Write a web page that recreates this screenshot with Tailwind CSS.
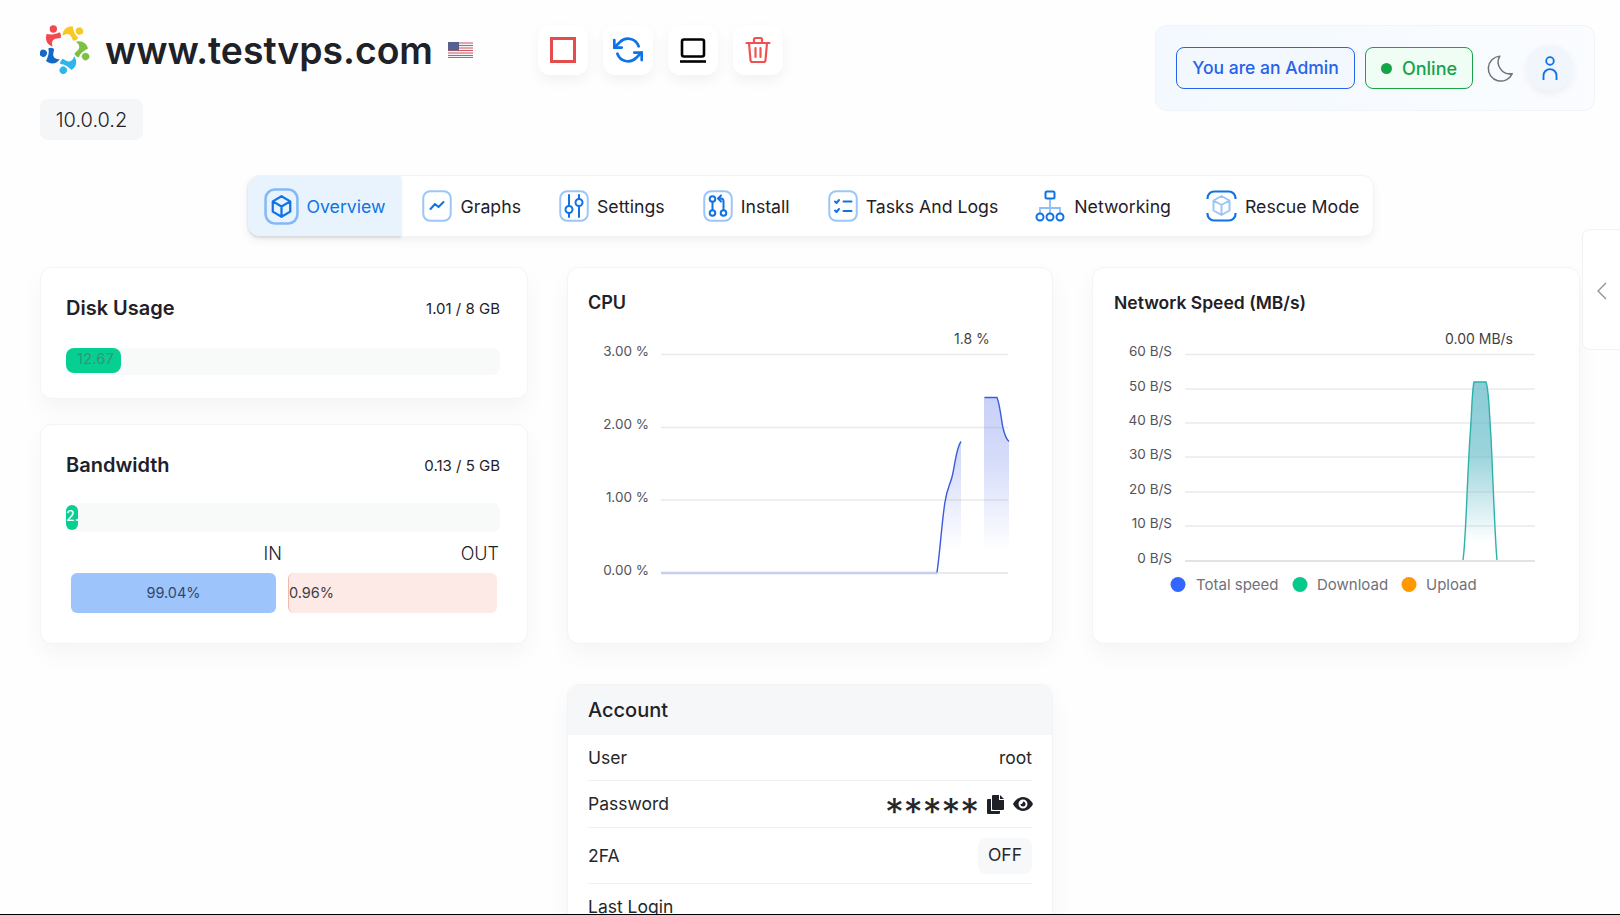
<!DOCTYPE html>
<html lang="en">
<head>
    <meta charset="UTF-8">
    <title>www.testvps.com</title>
    <script src="https://cdn.jsdelivr.net/npm/@tailwindcss/browser@4"></script>
</head>
<body class="bg-[#fefefe] font-['Inter',sans-serif] text-[#1f2128]">
<div class="relative h-[915px] overflow-hidden border-b border-black">

    <!-- Top bar -->
    <div class="flex justify-between pl-10 pr-[25px] pt-[25px]">
        <div>
            <div class="flex items-center h-[50px]">
                <svg class="w-[50px] h-[50px]" viewBox="30 31 150 150">
                    <g fill="#f0494f"><circle cx="70" cy="43" r="11"/><path d="M50 58C44 74 50 90 68 96 64 84 66 76 76 72L92 70C94 62 92 55 88 53 78 60 64 60 50 58Z"/></g>
                    <g fill="#f9c923" transform="rotate(72 105 100)"><circle cx="70" cy="43" r="11"/><path d="M50 58C44 74 50 90 68 96 64 84 66 76 76 72L92 70C94 62 92 55 88 53 78 60 64 60 50 58Z"/></g>
                    <g fill="#7cc242" transform="rotate(144 105 100)"><circle cx="70" cy="43" r="11"/><path d="M50 58C44 74 50 90 68 96 64 84 66 76 76 72L92 70C94 62 92 55 88 53 78 60 64 60 50 58Z"/></g>
                    <g fill="#2fb5ee" transform="rotate(216 105 100)"><circle cx="70" cy="43" r="11"/><path d="M50 58C44 74 50 90 68 96 64 84 66 76 76 72L92 70C94 62 92 55 88 53 78 60 64 60 50 58Z"/></g>
                    <g fill="#1269c7" transform="rotate(288 105 100)"><circle cx="70" cy="43" r="11"/><path d="M50 58C44 74 50 90 68 96 64 84 66 76 76 72L92 70C94 62 92 55 88 53 78 60 64 60 50 58Z"/></g>
                </svg>
                <h1 class="ml-[15px] text-[37.3px] font-semibold leading-none translate-y-px whitespace-nowrap">www.testvps.com</h1>
                <svg class="ml-[15px] w-[25px] h-4" viewBox="0 0 25 16">
                    <rect width="25" height="16" fill="#f4f2f4"/>
                    <path d="M0 1h25M0 3.500h25M0 6h25M0 8.500h25M0 11h25M0 13.500h25M0 15.500h25" stroke="#cf5a63" stroke-width="1.200"/>
                    <rect width="11" height="8.500" fill="#56618f"/>
                </svg>
                <!-- Action buttons -->
                <div class="ml-[65px] flex gap-[15px]">
                    <button class="w-[50px] h-[50px] rounded-xl bg-white shadow-[0_6px_14px_rgba(0,0,0,0.05)] flex items-center justify-center">
                        <svg class="w-[26px] h-[26px]" viewBox="0 0 26 26"><rect x="1.500" y="1.500" width="23" height="23" fill="none" stroke="#e54d4d" stroke-width="3"/></svg>
                    </button>
                    <button class="w-[50px] h-[50px] rounded-xl bg-white shadow-[0_6px_14px_rgba(0,0,0,0.05)] flex items-center justify-center">
                        <svg class="w-[30px] h-[30px]" viewBox="0 0 24 24" fill="none" stroke="#0f73e6" stroke-width="2.200" stroke-linecap="round" stroke-linejoin="round"><polyline points="1 4 1 10 7 10"/><polyline points="23 20 23 14 17 14"/><path d="M20.490 9A9 9 0 0 0 5.640 5.640L1 10m22 4l-4.640 4.360A9 9 0 0 1 3.510 15"/></svg>
                    </button>
                    <button class="w-[50px] h-[50px] rounded-xl bg-white shadow-[0_6px_14px_rgba(0,0,0,0.05)] flex items-center justify-center">
                        <svg class="w-[28px] h-[28px]" viewBox="0 0 28 28" fill="none" stroke="#000" stroke-width="2.600"><rect x="3" y="3.500" width="22" height="17" rx="2"/><path d="M1 25.500h26"/></svg>
                    </button>
                    <button class="w-[50px] h-[50px] rounded-xl bg-white shadow-[0_6px_14px_rgba(0,0,0,0.05)] flex items-center justify-center">
                        <svg class="w-[28px] h-[28px]" viewBox="0 0 28 28" fill="none" stroke="#f05252" stroke-width="2.200" stroke-linecap="round" stroke-linejoin="round"><path d="M2.500 7h23M10 7V3.500A1.500 1.500 0 0 1 11.500 2h5A1.500 1.500 0 0 1 18 3.500V7M5 7l1.500 17a2 2 0 0 0 2 2h11a2 2 0 0 0 2-2L23 7M11.500 12v9M16.500 12v9"/></svg>
                    </button>
                </div>
            </div>
            <div class="mt-6 w-[103px] h-[41px] rounded-lg bg-[#f5f6f8] flex items-center justify-center text-[20px] font-light">10.0.0.2</div>
        </div>

        <div class="w-[440px] h-[86px] rounded-xl border border-[#f0f3f8] bg-gradient-to-r from-[#f3f9fe] to-[#fafcff] flex items-center pl-5 pr-[20px]">
            <span class="w-[179px] h-[42px] rounded-lg border border-[#2563eb] bg-[#f3f7fe] text-[#2563eb] text-[17.5px] font-medium flex items-center justify-center">You are an Admin</span>
            <span class="ml-[10px] w-[108px] h-[42px] rounded-lg border border-[#16a34a] bg-[#f0fdf4] text-[#16a34a] text-[18px] font-medium flex items-center justify-center gap-[10px]"><span class="w-[11px] h-[11px] rounded-full bg-[#16a34a]"></span>Online</span>
            <svg class="ml-[13px] w-[30px] h-[30px]" viewBox="0 0 24 24" fill="none" stroke="#71717a" stroke-width="1.200" stroke-linejoin="round"><path d="M21 16.500A9.500 9.500 0 0 1 11 2.500a10 10 0 1 0 10 14z"/></svg>
            <div class="ml-[11px] w-[46px] h-[46px] rounded-full bg-[#f1f6fd] shadow-[0_3px_8px_rgba(0,0,0,0.06)] flex items-center justify-center">
                <svg class="w-[26px] h-[26px]" viewBox="0 0 24 24" fill="none" stroke="#0f73e6" stroke-width="1.700"><circle cx="12" cy="5.500" r="3.500"/><path d="M6 23v-4a6 6 0 0 1 12 0v4"/></svg>
            </div>
        </div>
    </div>

    <!-- Tabs -->
    <nav class="mt-[35px] mx-auto w-[1127px] h-[62px] flex rounded-xl bg-white border border-[#f3f4f6] shadow-[0_4px_10px_rgba(0,0,0,0.05)] text-[17.7px] whitespace-nowrap">
        <a class="flex items-center gap-2 h-full pl-4 pr-[15px] rounded-l-xl bg-[#e9f3fd] text-[#0f73e6] shadow-[0_2px_3px_rgba(0,0,0,0.12)]">
            <svg class="w-[35px] h-[37px]" viewBox="0 0 34 36" fill="none"><rect x="1.500" y="1.500" width="31" height="33" rx="9" stroke="#82b9f7" stroke-width="2.500"/><path d="M17 8l8.500 5v10L17 28l-8.500-5V13zM8.500 13l8.500 5 8.500-5M17 18v10" stroke="#0f73e6" stroke-width="2.200" stroke-linejoin="round"/></svg>
            <span class="translate-y-px">Overview</span>
        </a>
        <a class="flex items-center gap-[9px] h-full ml-[2px] pl-[19px] pr-[18px]">
            <svg class="w-[30px] h-[32px]" viewBox="0 0 30 32" fill="none"><rect x="1.250" y="1.250" width="27.500" height="29.500" rx="7" stroke="#9cc6f8" stroke-width="2"/><path d="M8.500 19l4.500-5 3.500 3 5-5" stroke="#0f73e6" stroke-width="2" stroke-linecap="round" stroke-linejoin="round"/></svg>
            <span class="translate-y-px">Graphs</span>
        </a>
        <a class="flex items-center gap-2 h-full pl-[20px] pr-[18px]">
            <svg class="w-[30px] h-[32px]" viewBox="0 0 30 32" fill="none"><rect x="1.250" y="1.250" width="27.500" height="29.500" rx="7" stroke="#9cc6f8" stroke-width="2"/><path d="M10 5v11M10 23v4M20 5v4M20 16v11" stroke="#0f73e6" stroke-width="2" stroke-linecap="round"/><circle cx="10" cy="19.500" r="3.500" stroke="#0f73e6" stroke-width="2"/><circle cx="20" cy="12.500" r="3.500" stroke="#0f73e6" stroke-width="2"/></svg>
            <span class="translate-y-px">Settings</span>
        </a>
        <a class="flex items-center gap-2 h-full pl-[20px] pr-[19px]">
            <svg class="w-[30px] h-[32px]" viewBox="0 0 30 32" fill="none"><rect x="1.250" y="1.250" width="27.500" height="29.500" rx="7" stroke="#9cc6f8" stroke-width="2"/><g stroke="#0f73e6" stroke-width="2" stroke-linecap="round" stroke-linejoin="round"><circle cx="9.500" cy="9" r="2.800"/><circle cx="9.500" cy="23" r="2.800"/><circle cx="20.500" cy="23" r="2.800"/><path d="M9.500 12v8M20.500 20v-9a2.500 2.500 0 0 0-2.500-2.500h-2M18 5.500l-3 3 3 3"/></g></svg>
            <span class="translate-y-px">Install</span>
        </a>
        <a class="flex items-center gap-2 h-full pl-[19px] pr-[19px]">
            <svg class="w-[30px] h-[32px]" viewBox="0 0 30 32" fill="none"><rect x="1.250" y="1.250" width="27.500" height="29.500" rx="7" stroke="#9cc6f8" stroke-width="2"/><g stroke="#0f73e6" stroke-width="2" stroke-linecap="round" stroke-linejoin="round"><path d="M7 11.500l1.500 1.500 2.500-3M7 20.500l1.500 1.500 2.500-3"/><path d="M15.500 11.500h8M15.500 21h8"/></g></svg>
            <span class="translate-y-px">Tasks And Logs</span>
        </a>
        <a class="flex items-center gap-[9px] h-full pl-[18px] pr-[19px]">
            <svg class="w-[30px] h-[32px]" viewBox="0 0 30 32" fill="none"><path d="M15 9v9M5 23v-5h20v5M15 18v5" stroke="#8ebff8" stroke-width="1.800"/><rect x="10.500" y="1.500" width="9" height="7" rx="1.500" stroke="#0f73e6" stroke-width="2"/><g stroke="#0f73e6" stroke-width="2"><circle cx="5" cy="27" r="3.500"/><circle cx="15" cy="27" r="3.500"/><circle cx="25" cy="27" r="3.500"/></g></svg>
            <span class="translate-y-px">Networking</span>
        </a>
        <a class="flex items-center gap-2 h-full pl-4 pr-[14px]">
            <svg class="w-[31px] h-[32px]" viewBox="0 0 31 32" fill="none"><path d="M1.500 9V8A6.500 6.500 0 0 1 8 1.500h15A6.500 6.500 0 0 1 29.500 8v1M1.500 23v1A6.500 6.500 0 0 0 8 30.500h15A6.500 6.500 0 0 0 29.500 24v-1" stroke="#0f73e6" stroke-width="2.200"/><path d="M15.500 6l8 4.500v10l-8 4.500-8-4.500v-10zM7.500 10.500l8 4.500 8-4.500M15.500 15v10" stroke="#9cc6f8" stroke-width="2" stroke-linejoin="round"/></svg>
            <span class="translate-y-px">Rescue Mode</span>
        </a>
    </nav>

    <!-- Cards -->
    <div class="mt-[30px] ml-10 grid grid-cols-[488px_486px_488px] gap-x-[39px] gap-y-[40px] items-start">
        <div class="flex flex-col gap-[25px]">
            <section class="h-[132px] rounded-xl bg-white border border-[#f3f4f6] shadow-[0_10px_24px_rgba(0,0,0,0.04)] pt-[26px] pl-[25px] pr-[27px]">
                <div class="flex items-center justify-between h-7">
                    <h2 class="text-[20px] font-semibold">Disk Usage</h2>
                    <span class="text-[15px] translate-y-px">1.01 / 8 GB</span>
                </div>
                <div class="mt-[26px] h-[27px] rounded-lg bg-[#f8f9f9]">
                    <div class="w-[55px] h-[25px] rounded-lg bg-[#06cf92] pl-[11px] text-[15px] leading-[22px] text-[#3a9478]">12.67</div>
                </div>
            </section>
            <section class="h-[220px] rounded-xl bg-white border border-[#f3f4f6] shadow-[0_10px_24px_rgba(0,0,0,0.04)] pt-[26px] pl-[25px] pr-[27px]">
                <div class="flex items-center justify-between h-7">
                    <h2 class="text-[20px] font-semibold">Bandwidth</h2>
                    <span class="text-[15px] translate-y-px">0.13 / 5 GB</span>
                </div>
                <div class="mt-[24px] h-[29px] rounded-lg bg-[#f8f9f9] pt-[2px]">
                    <div class="w-[12px] h-[25px] rounded-lg bg-[#06cf92] text-white text-[14px] font-medium leading-[22px] overflow-hidden">2.</div>
                </div>
                <div class="mt-[9px] flex h-6 items-center text-[18px] font-light">
                    <div class="w-[216px] text-right">IN</div>
                    <div class="flex-1 text-right pr-[1px]">OUT</div>
                </div>
                <div class="mt-2 flex pl-[5px] gap-3 text-[14.500px]">
                    <div class="w-[205px] h-10 rounded-md bg-[#9ec5fb] text-[#33486b] flex items-center justify-center">99.04%</div>
                    <div class="w-[209px] h-10 rounded-md bg-[#fdeae7] border-l border-[#efb9ae] text-[#3f3f46] flex items-center">0.96%</div>
                </div>
            </section>
        </div>

        <!-- CPU chart -->
        <section class="h-[377px] rounded-xl bg-white border border-[#f3f4f6] shadow-[0_10px_24px_rgba(0,0,0,0.04)] pt-[21px]">
            <h2 class="px-[20px] h-7 leading-7 text-[18px] font-semibold">CPU</h2>
            <svg class="mt-[3px] block" width="484" height="290" viewBox="568 320 484 290" font-family="Inter, sans-serif" font-size="13.500">
                <defs>
                    <linearGradient id="cpuFill" gradientUnits="userSpaceOnUse" x1="0" y1="397" x2="0" y2="550"><stop offset="0" stop-color="#7b90ee" stop-opacity=".42"/><stop offset=".4" stop-color="#7b90ee" stop-opacity=".32"/><stop offset="1" stop-color="#7b90ee" stop-opacity="0"/></linearGradient>
                </defs>
                <g stroke="#e9eaec" stroke-width="1.500"><path d="M661 354.500H1008M661 427.500H1008M661 500H1008"/><path d="M661 573H1008" stroke="#e2e3e6"/></g>
                <g fill="#52525b" text-anchor="end"><text x="649" y="356">3.00 %</text><text x="649" y="429">2.00 %</text><text x="649" y="502">1.00 %</text><text x="649" y="575">0.00 %</text></g>
                <text x="972" y="344" text-anchor="middle" fill="#3f3f46" font-size="14">1.8 %</text>
                <path d="M937 572.500C940 552 942 520 945 502 947 488 950 485 952 477 955 466 956 448 961 441.500V552H945Z" fill="url(#cpuFill)"/>
                <path d="M984 397.500H997C1000 405 1001 418 1003 428 1005 436 1007 440 1009 441.500V552H984Z" fill="url(#cpuFill)"/>
                <path d="M661 573H937" stroke="#c6cff2" stroke-width="2.500"/>
                <path d="M937 572.500C940 552 942 520 945 502 947 488 950 485 952 477 955 466 956 448 961 441.500M984.500 397.500H997C1000 405 1001 418 1003 428 1005 436 1007 440 1009 441.500" fill="none" stroke="#3b5bdb" stroke-width="1.400"/>
            </svg>
        </section>

        <!-- Network speed chart -->
        <section class="h-[377px] rounded-xl bg-white border border-[#f3f4f6] shadow-[0_10px_24px_rgba(0,0,0,0.04)] pt-[21px]">
            <h2 class="px-[21px] h-7 leading-7 text-[17.500px] font-semibold">Network Speed (MB/s)</h2>
            <svg class="mt-[3px] block" width="486" height="290" viewBox="1093 320 486 290" font-family="Inter, sans-serif" font-size="13.500">
                <defs>
                    <linearGradient id="netFill" x1="0" y1="0" x2="0" y2="1"><stop offset="0" stop-color="#6fc0cc" stop-opacity=".8"/><stop offset=".4" stop-color="#6fc0cc" stop-opacity=".7"/><stop offset=".9" stop-color="#6fc0cc" stop-opacity="0"/></linearGradient>
                </defs>
                <g stroke="#e9eaec" stroke-width="1.500"><path d="M1185 354.500H1535M1185 389H1535M1185 423H1535M1185 457H1535M1185 492H1535M1185 526H1535"/><path d="M1185 561H1535" stroke="#e2e3e6" stroke-width="2"/></g>
                <g fill="#52525b" text-anchor="end"><text x="1172" y="356">60 B/S</text><text x="1172" y="391">50 B/S</text><text x="1172" y="425">40 B/S</text><text x="1172" y="459">30 B/S</text><text x="1172" y="494">20 B/S</text><text x="1172" y="528">10 B/S</text><text x="1172" y="563">0 B/S</text></g>
                <text x="1479" y="344" text-anchor="middle" fill="#3f3f46" font-size="14">0.00 MB/s</text>
                <path d="M1463 560C1466 540 1467 480 1470 437 1472 410 1472 390 1474 382H1486C1489 390 1489 410 1491 437 1493 480 1495 540 1497 560Z" fill="url(#netFill)"/>
                <path d="M1463 560C1466 540 1467 480 1470 437 1472 410 1472 390 1474 382H1486C1489 390 1489 410 1491 437 1493 480 1495 540 1497 560" fill="none" stroke="#2bb3aa" stroke-width="1.400"/>
                <circle cx="1178" cy="584.500" r="7.500" fill="#3366ff"/><text x="1196" y="590" font-size="15" fill="#71717a">Total speed</text>
                <circle cx="1300" cy="584.500" r="7.500" fill="#06c98c"/><text x="1317" y="590" font-size="15" fill="#71717a">Download</text>
                <circle cx="1409" cy="584.500" r="7.500" fill="#ff9800"/><text x="1426" y="590" font-size="15" fill="#71717a">Upload</text>
            </svg>
        </section>

        <!-- Account -->
        <section class="col-start-2 rounded-xl bg-white border border-[#f3f4f6] shadow-[0_10px_24px_rgba(0,0,0,0.04)] text-[17.500px]">
            <h2 class="h-[50px] pb-px px-[20px] flex items-center rounded-t-xl bg-[#f6f7f9] text-[20px] font-medium">Account</h2>
            <div class="mt-px mx-[20px] text-[#27272a]">
                <div class="h-[45px] flex items-center justify-between border-b border-[#f0f1f3]"><span>User</span><span>root</span></div>
                <div class="h-[47px] flex items-center justify-between border-b border-[#f0f1f3]">
                    <span>Password</span>
                    <span class="flex items-center -mr-px">
                        <span class="text-[37.500px] leading-none translate-y-[9px]">*****</span>
                        <svg class="ml-2 w-[18px] h-[19px]" viewBox="0 0 18 19" fill="#1f2128"><path d="M6 0h6v5h5v9a1 1 0 0 1-1 1H6a1 1 0 0 1-1-1V1a1 1 0 0 1 1-1zM13 0l4 4h-4zM1 4h3v12h9v2a1 1 0 0 1-1 1H1a1 1 0 0 1-1-1V5a1 1 0 0 1 1-1z"/></svg>
                        <svg class="ml-2 w-[20px] h-[14px]" viewBox="0 0 20 14" fill="#1f2128"><path fill-rule="evenodd" d="M10 0c5 0 9 4.500 10 7-1 2.500-5 7-10 7S1 9.500 0 7c1-2.500 5-7 10-7zm0 2.500a4.500 4.500 0 1 0 0 9 4.500 4.500 0 0 0 0-9zM10 4.500a2.500 2.500 0 1 1-2.500 2.500c.8.300 2.500-.5 2.500-2.500z"/></svg>
                    </span>
                </div>
                <div class="h-[56px] flex items-center justify-between border-b border-[#f0f1f3]"><span class="translate-y-px">2FA</span><span class="w-[54px] h-[36px] rounded-lg bg-[#f7f8f9] flex items-center justify-center">OFF</span></div>
                <div class="h-[46px] flex items-center"><span>Last Login</span></div>
            </div>
        </section>
    </div>

    <!-- Collapsed side panel -->
    <div class="absolute left-[1582px] top-[229px] w-[38px] h-[121px] rounded-l-lg bg-white border border-r-0 border-[#f1f2f4] flex items-start pt-[52px] pl-[13px]">
        <svg class="w-[11px] h-[18px]" viewBox="0 0 11 18" fill="none" stroke="#8a8f98" stroke-width="1.300"><path d="M10 1L2 9l8 8"/></svg>
    </div>
</div>
</body>
</html>
